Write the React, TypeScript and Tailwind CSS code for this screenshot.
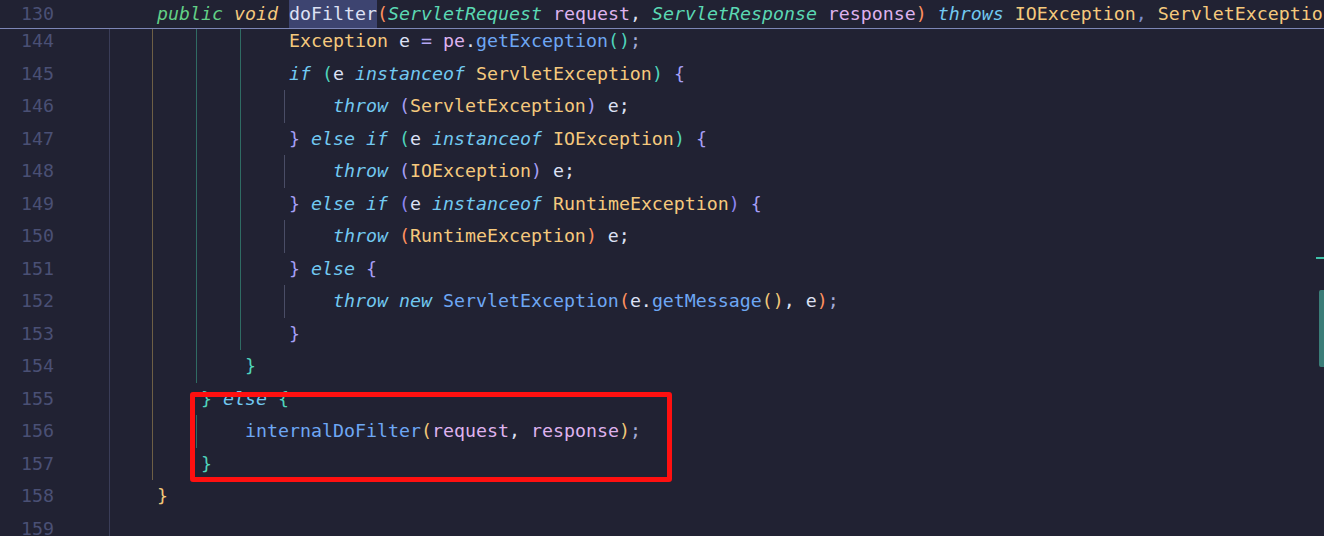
type Tok = [string, string];

const FG = "text-[#dde1f4]";
const PUN = "text-[#a4abd6]";
const OP = "text-[#b4a7f4]";
const PARAM = "text-[#dfb2ee]";
const FN = "text-[#6ea7f4]";
const TYPE = "text-[#f5c97d]";
const KW = "text-[#72c9f1] italic";
const PUB = "text-[#62cf86] italic";
const VOID = "text-[#f5c97d] italic";
const MINT = "text-[#5bd8b3] italic";
const ORANGE = "text-[#ff915f]";
const TEAL = "text-[#4fd4bc]";
const PURPLE = "text-[#8f86f2]";
const LAV = "text-[#a69ff6]";
const GOLD = "text-[#f2c879]";

type Row = {
  n: number;
  indent: number;
  guides: number[];
  toks: Tok[];
};

const rows: Row[] = [
  { n: 144, indent: 4, guides: [0, 1, 2, 3], toks: [["Exception", TYPE], [" e ", FG], ["=", OP], [" pe", PARAM], [".", FG], ["getException", FN], ["()", TEAL], [";", PUN]] },
  { n: 145, indent: 4, guides: [0, 1, 2, 3], toks: [["if", KW], [" ", FG], ["(", TEAL], ["e ", FG], ["instanceof", KW], [" ServletException", TYPE], [")", TEAL], [" ", FG], ["{", LAV]] },
  { n: 146, indent: 5, guides: [0, 1, 2, 3, 4], toks: [["throw", KW], [" ", FG], ["(", LAV], ["ServletException", TYPE], [")", LAV], [" e;", FG]] },
  { n: 147, indent: 4, guides: [0, 1, 2, 3], toks: [["}", LAV], [" ", FG], ["else if", KW], [" ", FG], ["(", TEAL], ["e ", FG], ["instanceof", KW], [" IOException", TYPE], [")", TEAL], [" ", FG], ["{", LAV]] },
  { n: 148, indent: 5, guides: [0, 1, 2, 3, 4], toks: [["throw", KW], [" ", FG], ["(", LAV], ["IOException", TYPE], [")", LAV], [" e;", FG]] },
  { n: 149, indent: 4, guides: [0, 1, 2, 3], toks: [["}", LAV], [" ", FG], ["else if", KW], [" ", FG], ["(", PURPLE], ["e ", FG], ["instanceof", KW], [" RuntimeException", TYPE], [")", PURPLE], [" ", FG], ["{", LAV]] },
  { n: 150, indent: 5, guides: [0, 1, 2, 3, 4], toks: [["throw", KW], [" ", FG], ["(", ORANGE], ["RuntimeException", TYPE], [")", ORANGE], [" e;", FG]] },
  { n: 151, indent: 4, guides: [0, 1, 2, 3], toks: [["}", LAV], [" ", FG], ["else", KW], [" ", FG], ["{", LAV]] },
  { n: 152, indent: 5, guides: [0, 1, 2, 3, 4], toks: [["throw new", KW], [" ServletException", FN], ["(", ORANGE], ["e.", FG], ["getMessage", FN], ["()", GOLD], [", e", FG], [")", ORANGE], [";", PUN]] },
  { n: 153, indent: 4, guides: [0, 1, 2, 3], toks: [["}", LAV]] },
  { n: 154, indent: 3, guides: [0, 1, 2], toks: [["}", TEAL]] },
  { n: 155, indent: 2, guides: [0, 1], toks: [["}", TEAL], [" ", FG], ["else", KW], [" ", FG], ["{", TEAL]] },
  { n: 156, indent: 3, guides: [0, 1, 2], toks: [["internalDoFilter", FN], ["(", GOLD], ["request", PARAM], [", ", FG], ["response", PARAM], [")", GOLD], [";", PUN]] },
  { n: 157, indent: 2, guides: [0, 1], toks: [["}", TEAL]] },
  { n: 158, indent: 1, guides: [0], toks: [["}", GOLD]] },
  { n: 159, indent: 0, guides: [0], toks: [] },
];

const guideStyle = [
  "left-[1px] bg-[#3a3d58]",
  "left-[44px] bg-[#6e5f45]",
  "left-[88px] bg-[#2f6b63]",
  "left-[132px] bg-[#2f6b63]",
  "left-[176px] bg-[#4a4d66]",
];

const header: Tok[] = [
  ["public", PUB],
  [" ", FG],
  ["void", VOID],
  [" ", FG],
];

const headerRest: Tok[] = [
  ["(", ORANGE],
  ["ServletRequest", MINT],
  [" request", PARAM],
  [",", FG],
  [" ", FG],
  ["ServletResponse", MINT],
  [" response", PARAM],
  [")", ORANGE],
  [" ", FG],
  ["throws", KW],
  [" IOException", TYPE],
  [",", "text-[#7e8cc8]"],
  [" ServletException", TYPE],
  [" {", LAV],
];

export default function App() {
  return (
    <div
      className="relative w-[1324px] h-[536px] overflow-hidden bg-[#212233] text-[18.27px]"
      style={{ fontFamily: '"DejaVu Sans Mono", "Liberation Mono", monospace' }}
    >
      {/* sticky method header */}
      <div className="relative z-10 flex h-[29px] border-b border-[#7d86b6] bg-[#212233] leading-[28px]">
        <div className="w-[108px] shrink-0">
          <span className="block w-[54px] text-right text-[#4a5075]">130</span>
        </div>
        <div className="whitespace-pre pl-[5px]">
          <span>{"    "}</span>
          {header.map(([s, c], i) => (
            <span key={i} className={c}>
              {s}
            </span>
          ))}
          <span className="inline-block h-[28px] bg-[#3d4470] text-[#dde1f4]">doFilter</span>
          {headerRest.map(([s, c], i) => (
            <span key={i} className={c}>
              {s}
            </span>
          ))}
        </div>
      </div>

      <div className="-mt-[4px] flex flex-col">
        {rows.map((r) => (
          <div key={r.n} className="flex h-[32.5px] items-center leading-[32.5px]">
            <div className="w-[108px] shrink-0">
              <span className="block w-[54px] text-right text-[#4a5075]">{r.n}</span>
            </div>
            <div className="relative h-full flex-1 whitespace-pre pl-[5px]">
              {r.guides.map((g) => (
                <div key={g} className={`absolute top-0 h-full w-px ${guideStyle[g]}`} />
              ))}
              <span>{" ".repeat(r.indent * 4)}</span>
              {r.toks.map(([s, c], i) => (
                <span key={i} className={c}>
                  {s}
                </span>
              ))}
            </div>
          </div>
        ))}
      </div>

      {/* highlight annotation */}
      <div className="absolute left-[190px] top-[392px] h-[90px] w-[482px] rounded-[3px] border-[5px] border-[#ff1010]" />

      {/* scrollbar markers */}
      <div className="absolute right-0 top-[257px] h-[2px] w-[8px] bg-[#3fc2aa]" />
      <div className="absolute right-0 top-[290px] h-[77px] w-[5px] rounded-l-[2px] bg-[#3a7d78]" />
    </div>
  );
}
